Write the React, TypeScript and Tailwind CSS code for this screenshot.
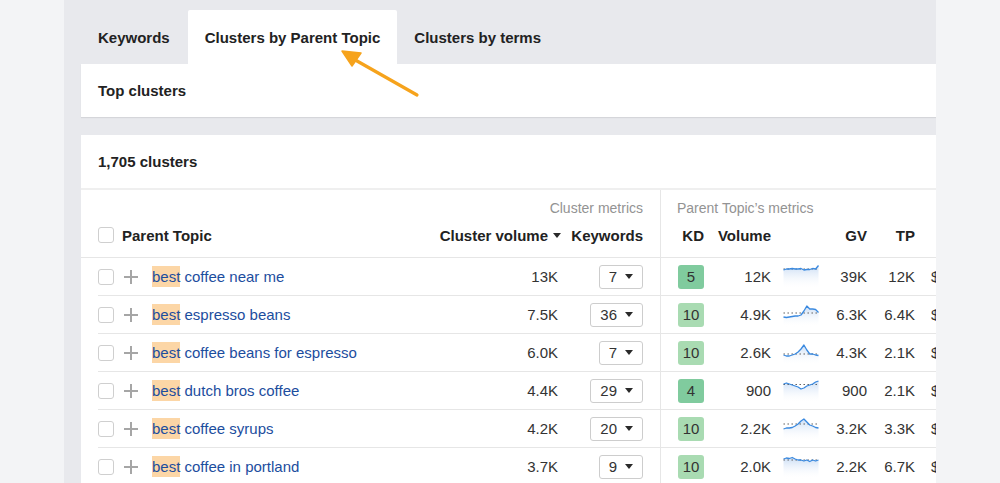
type Row = {
    kw: string;
    vol: string;
    kws: string;
    kd: number;
    pv: string;
    gv: string;
    tp: string;
    cpc: string;
    spark: number[];
    dot: number;
};

const rows: Row[] = [
    { kw: "coffee near me", vol: "13K", kws: "7", kd: 5, pv: "12K", gv: "39K", tp: "12K", cpc: "$1.50", spark: [5, 4, 4, 3.5, 4, 4, 3.5, 5, 4.5, 4.5, 3.5, 4, 0.5], dot: 4 },
    { kw: "espresso beans", vol: "7.5K", kws: "36", kd: 10, pv: "4.9K", gv: "6.3K", tp: "6.4K", cpc: "$0.90", spark: [14, 14.5, 14, 13.5, 13, 13, 12, 8, 3, 6, 6, 6.5, 9.5], dot: 10 },
    { kw: "coffee beans for espresso", vol: "6.0K", kws: "7", kd: 10, pv: "2.6K", gv: "4.3K", tp: "2.1K", cpc: "$0.80", spark: [14, 15, 15, 14, 13, 11, 8, 4, 9, 13, 13, 14, 14.5], dot: 13 },
    { kw: "dutch bros coffee", vol: "4.4K", kws: "29", kd: 4, pv: "900", gv: "900", tp: "2.1K", cpc: "$0.40", spark: [5, 4, 5, 6, 7, 8, 10, 9, 7, 6, 5, 3, 2], dot: 5.5 },
    { kw: "coffee syrups", vol: "4.2K", kws: "20", kd: 10, pv: "2.2K", gv: "3.2K", tp: "3.3K", cpc: "$0.70", spark: [12, 11, 11, 10.5, 9, 7, 4, 2, 5, 8, 9, 10.5, 11], dot: 7 },
    { kw: "coffee in portland", vol: "3.7K", kws: "9", kd: 10, pv: "2.0K", gv: "2.2K", tp: "6.7K", cpc: "$1.10", spark: [4, 3, 3.5, 2.5, 4, 5, 5, 6, 5, 6.5, 5, 6, 5], dot: 5 },
];

const Sparkline = ({ data, dot, id }: { data: number[]; dot: number; id: string }) => {
    const step = 35 / (data.length - 1);
    const pts = data.map((v, i) => `${(0.5 + i * step).toFixed(2)},${v}`).join(" ");
    return (
        <svg width="36" height="24" viewBox="0 0 36 24">
            <defs>
                <linearGradient id={id} x1="0" y1="0" x2="0" y2="1">
                    <stop offset="0" stopColor="#c9dcf4" />
                    <stop offset="1" stopColor="#ffffff" stopOpacity="0" />
                </linearGradient>
            </defs>
            <polygon points={`0.5,24 ${pts} 35.5,24`} fill={`url(#${id})`} />
            <line x1="0.5" y1={dot} x2="35.5" y2={dot} stroke="#555" strokeWidth="1.1" strokeDasharray="1.4 2.6" />
            <polyline points={pts} fill="none" stroke="#3b8ae0" strokeWidth="1.3" strokeLinejoin="round" />
        </svg>
    );
};

const Checkbox = () => <div className="h-4 w-4 shrink-0 rounded-[3px] border border-[#cfcfcf] bg-white" />;

const PlusMark = () => (
    <svg width="14" height="14" viewBox="0 0 14 14" className="ml-[10px] shrink-0">
        <path d="M7 0v14M0 7h14" stroke="#a6a6a6" strokeWidth="2" />
    </svg>
);

const Caret = () => (
    <svg width="8" height="5" viewBox="0 0 8 5" className="shrink-0">
        <polygon points="0,0 8,0 4,5" fill="#2a2a2a" />
    </svg>
);

const App = () => {
    return (
        <div
            className="relative flex h-[483px] w-[1000px] overflow-hidden bg-[#f3f4f6] text-[15px] text-[#333]"
            style={{ fontFamily: '"Liberation Sans", Arial, sans-serif' }}
        >
            <div className="w-[64px] shrink-0" />
            <div className="w-[872px] shrink-0 overflow-hidden bg-[#e8e9ed] pl-[17px]">
                {/* tabs */}
                <div className="flex h-[64px] items-end font-bold text-[#222]">
                    <div className="flex h-[54px] items-center pl-[17px] pr-[18px] pt-[2px]">Keywords</div>
                    <div className="flex h-[54px] items-center rounded-t-[2px] bg-white px-[17px] pt-[2px]">Clusters by Parent Topic</div>
                    <div className="flex h-[54px] items-center px-[17px] pt-[2px]">Clusters by terms</div>
                </div>

                <div className="flex h-[53px] items-center bg-white pl-[17px] pt-[2px] font-bold text-[#222] shadow-[0_1px_1px_rgba(0,0,0,0.08)]">
                    Top clusters
                </div>

                <div className="mt-[18px] w-[1000px] bg-white">
                    <div className="flex h-[55px] items-center border-b-2 border-[#efefef] pl-[17px] pt-[2px] font-bold text-[#222]">
                        1,705 clusters
                    </div>

                    {/* table header */}
                    <div className="flex h-[68px] border-b border-[#e6e6e6]">
                        <div className="flex w-[579px] shrink-0 flex-col pl-[17px] pr-[17px]">
                            <div className="flex h-[35px] items-center justify-end pt-[2px] text-[14px] text-[#939393]">Cluster metrics</div>
                            <div className="flex h-[20px] items-center font-bold text-[#222]">
                                <Checkbox />
                                <span className="ml-[8px] pt-[2px]">Parent Topic</span>
                                <div className="flex-1" />
                                <div className="flex items-center gap-[5px] pr-[1px]">
                                    <span className="pt-[2px]">Cluster volume</span>
                                    <Caret />
                                </div>
                                <div className="w-[81px] pt-[2px] text-right">Keywords</div>
                            </div>
                        </div>
                        <div className="flex flex-1 flex-col border-l border-[#e6e6e6]">
                            <div className="flex h-[35px] items-center pl-[16px] pt-[2px] text-[14px] text-[#939393]">Parent Topic’s metrics</div>
                            <div className="flex h-[20px] items-center pt-[2px] font-bold text-[#222]">
                                <div className="w-[43px] text-right">KD</div>
                                <div className="w-[67px] text-right">Volume</div>
                                <div className="w-[60px]" />
                                <div className="w-[36px] text-right">GV</div>
                                <div className="w-[48px] text-right">TP</div>
                            </div>
                        </div>
                    </div>

                    {rows.map((r, i) => (
                        <div key={i} className="flex h-[38px]">
                            <div className="w-[579px] shrink-0 pl-[17px]">
                                <div className="flex h-full items-center border-b border-[#e6e6e6] pr-[17px]">
                                    <Checkbox />
                                    <PlusMark />
                                    <span className="ml-[14px] pt-[2px] text-[#1c4d9e]">
                                        <span className="bg-[#fcd6a6] py-[2px]">best</span> {r.kw}
                                    </span>
                                    <div className="flex-1" />
                                    <div className="pr-[4px] pt-[2px]">{r.vol}</div>
                                    <div className="flex w-[81px] justify-end">
                                        <div className="flex h-[24px] items-center gap-[8px] rounded-[3px] border border-[#cdcdcd] pl-[9px] pr-[9px] text-[#333]">
                                            <span className="pt-[1px]">{r.kws}</span>
                                            <Caret />
                                        </div>
                                    </div>
                                </div>
                            </div>
                            <div className="flex flex-1 items-center border-b border-l border-[#e6e6e6] text-[#333]">
                                <div className="flex w-[43px] justify-end">
                                    <div
                                        className={`flex h-[24px] w-[26px] items-center justify-center rounded-[3px] pt-[1px] ${
                                            r.kd < 10 ? "bg-[#80cb9e]" : "bg-[#a9dbb2]"
                                        }`}
                                    >
                                        {r.kd}
                                    </div>
                                </div>
                                <div className="w-[67px] pt-[2px] text-right">{r.pv}</div>
                                <div className="ml-[12px] w-[48px]">
                                    <Sparkline data={r.spark} dot={r.dot} id={`sp${i}`} />
                                </div>
                                <div className="w-[36px] pt-[2px] text-right">{r.gv}</div>
                                <div className="w-[48px] pt-[2px] text-right">{r.tp}</div>
                                <div className="ml-[16px] pt-[2px]">{r.cpc}</div>
                            </div>
                        </div>
                    ))}
                </div>
            </div>
            <div className="flex-1" />

            {/* annotation arrow */}
            <svg className="pointer-events-none absolute left-0 top-0" width="1000" height="120">
                <line x1="417" y1="95" x2="350" y2="57" stroke="#f6a31c" strokeWidth="3.2" strokeLinecap="round" />
                <polygon points="342,51 361,53 352,66" fill="#f6a31c" stroke="#f6a31c" strokeWidth="1.5" strokeLinejoin="round" />
            </svg>
        </div>
    );
};

export default App;
